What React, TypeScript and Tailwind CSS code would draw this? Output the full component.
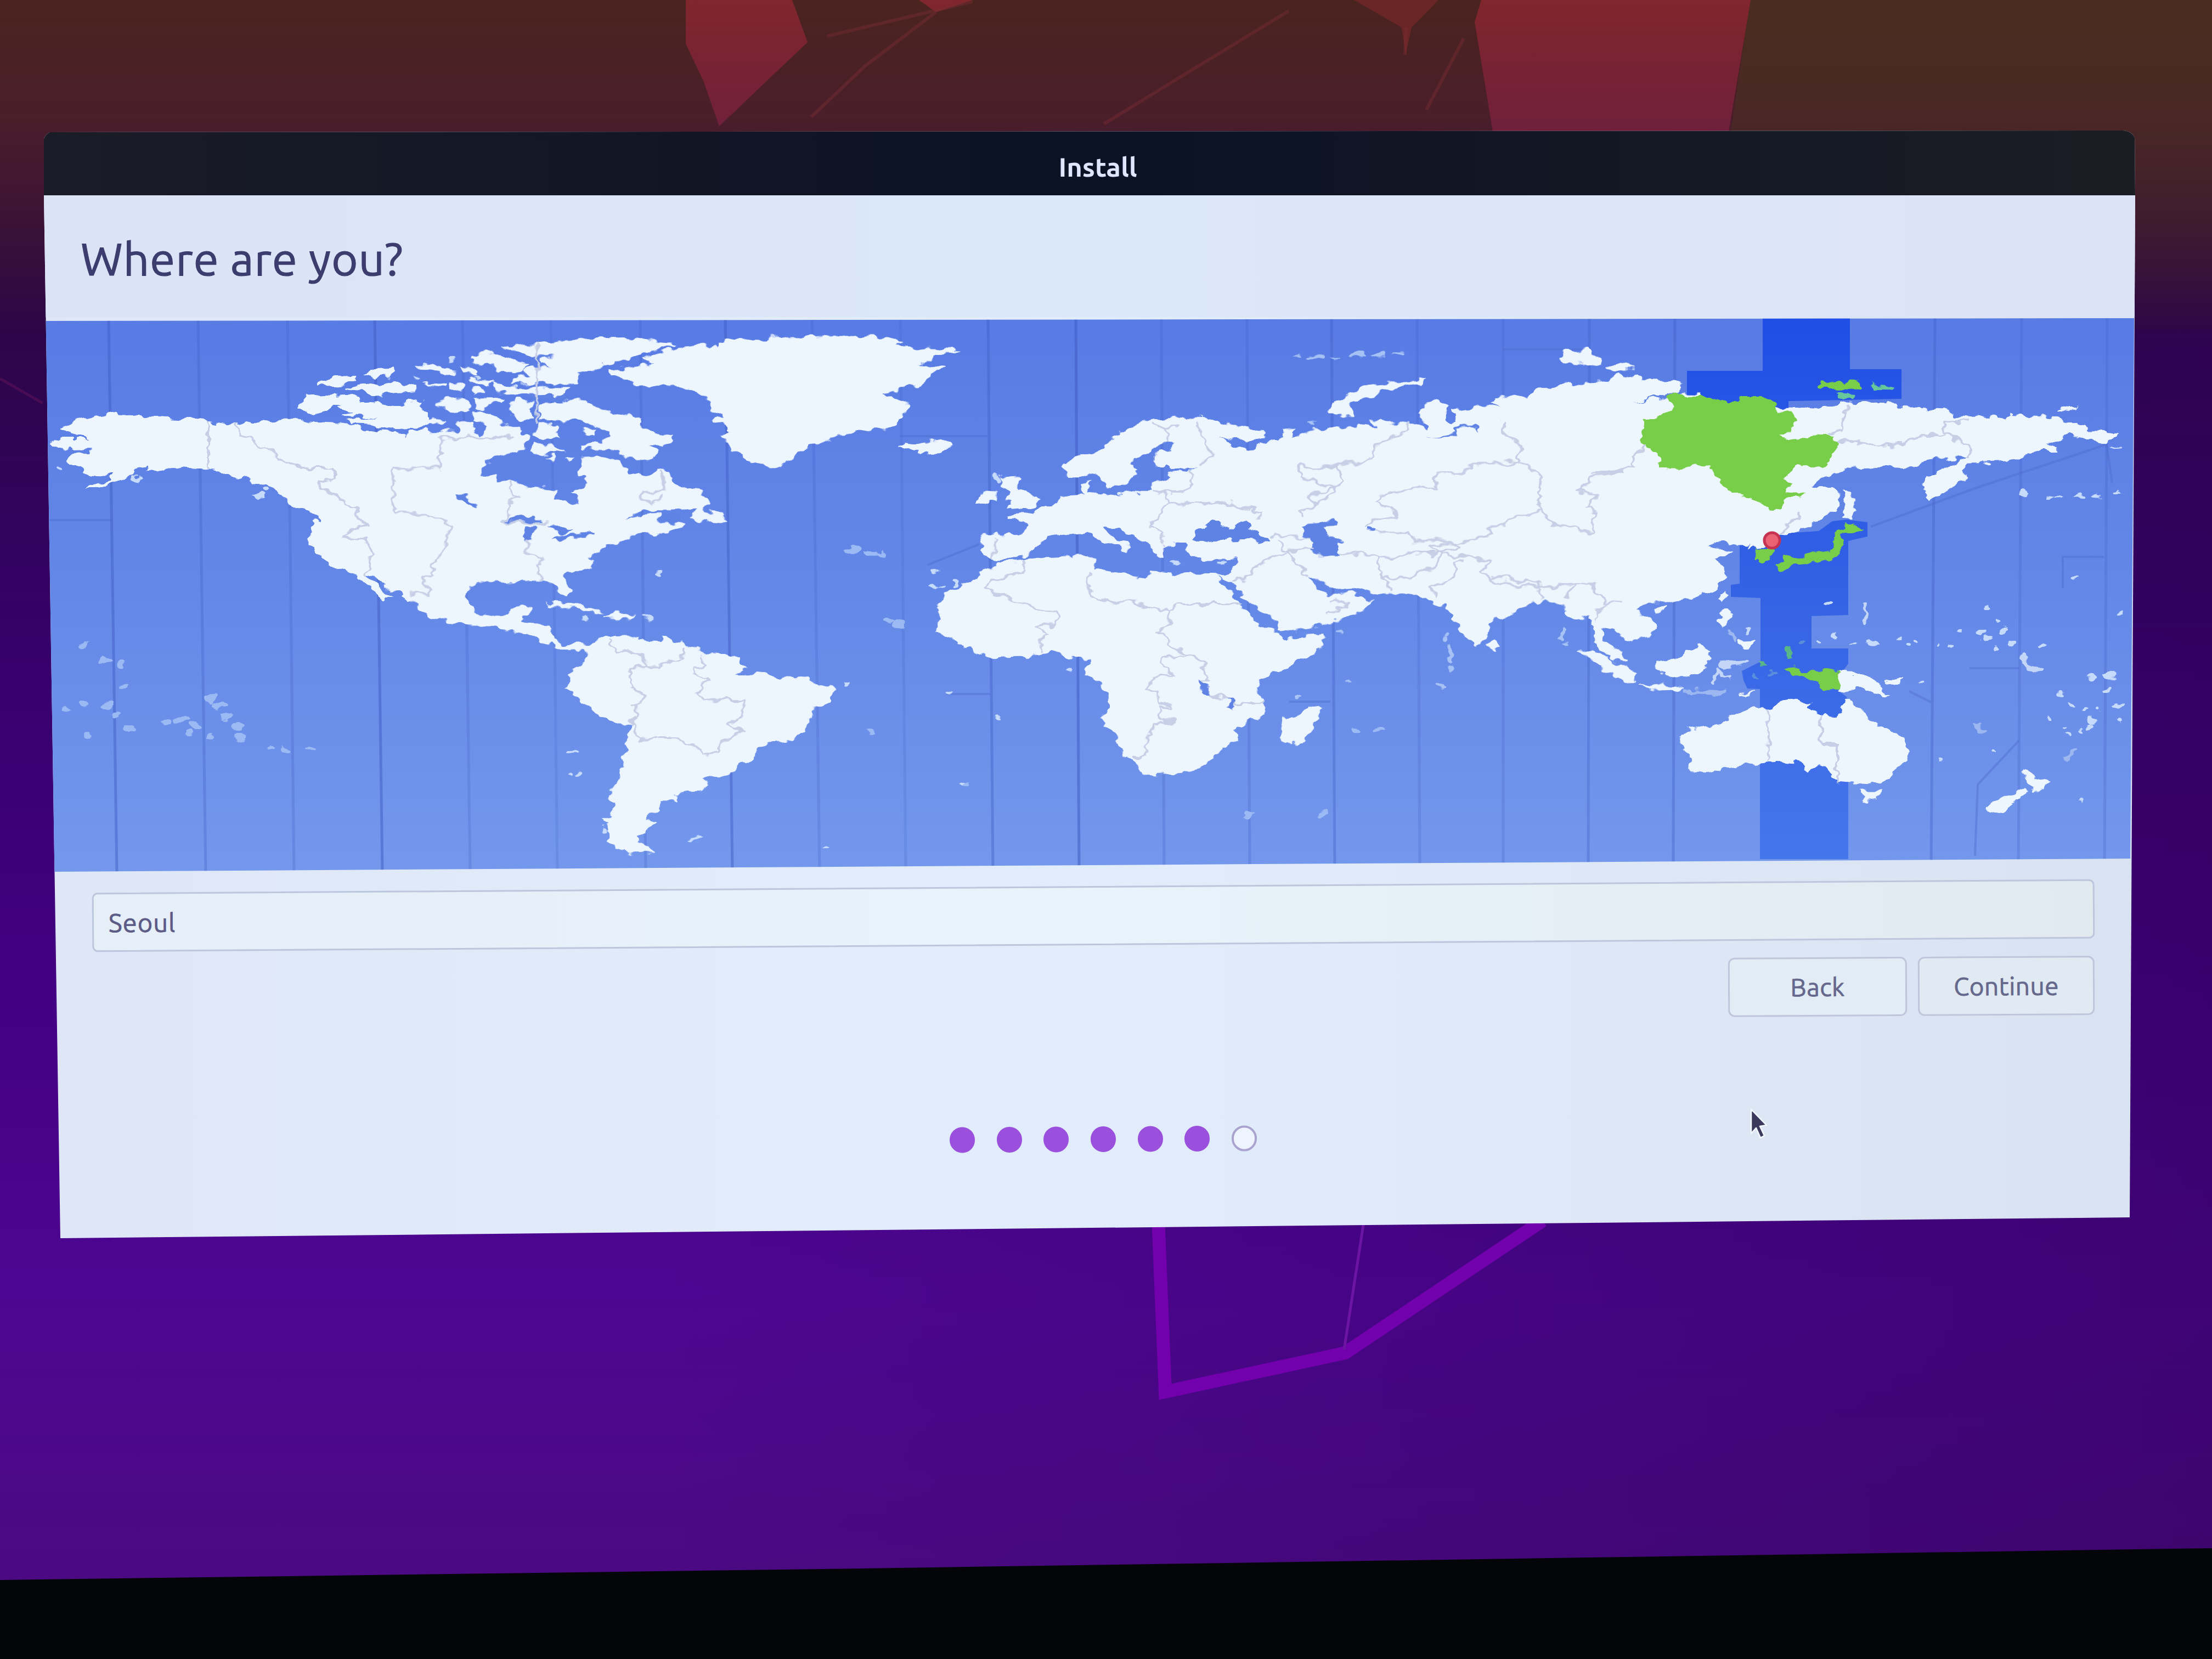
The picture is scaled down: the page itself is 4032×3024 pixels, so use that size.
import React from "react";

type Dot = [number, number, number, number];

const LAND = "fill-[#edf5fd] stroke-[#edf5fd]";
const BORDER = "fill-none stroke-[#c6cfe5]";
const WATER = "fill-[#5f83e4]";
const GREEN = "fill-[#78ce4a]";

const FONT = "font-['Ubuntu','Noto_Sans','Open_Sans',sans-serif]";

/* Hour lines of the map: x at the upper edge, x at the lower edge, line strength. */
const meridians: [number, number, number][] = [
  [198, 213, 0.45], [361, 375, 0.3], [524, 536, 0.25], [683, 697, 0.5], [843, 857, 0.22],
  [1004, 1016, 0.18], [1167, 1177, 0.25], [1322, 1335, 0.45], [1480, 1494, 0.22], [1641, 1651, 0.18],
  [1801, 1810, 0.4], [1961, 1967, 0.55], [2117, 2122, 0.25], [2273, 2278, 0.25], [2427, 2433, 0.35],
  [2583, 2588, 0.22], [2740, 2740, 0.22], [2897, 2895, 0.32], [3053, 3050, 0.35], [3527, 3520, 0.35],
  [3685, 3679, 0.25], [3841, 3836, 0.25],
];

function Region({ x, y, sx, sy, children }: { x: number; y: number; sx: number; sy: number; children: React.ReactNode }) {
  return <g transform={`translate(${x} ${y}) scale(${1 / sx} ${1 / sy})`}>{children}</g>;
}

function Shape({ d, className = LAND, width = 2 }: { d: string; className?: string; width?: number }) {
  return <path d={d} className={className} strokeWidth={width} strokeLinejoin="round" strokeLinecap="round" vectorEffect="non-scaling-stroke" />;
}

function Islands({ dots, className = "fill-[#c6dafa]" }: { dots: Dot[]; className?: string }) {
  return (
    <g className={className}>
      {dots.map(([x, y, rx, ry], i) => (
        <ellipse key={i} cx={x} cy={y} rx={rx} ry={ry} />
      ))}
    </g>
  );
}

function Alaska() {
  return (
    <Region x={80} y={570} sx={2.24} sy={3}>
      <Shape d="M290 548L320 565 400 570 520 580 620 588 680 598 760 612 800 618 830 600 850 612 880 600 930 585 960 590 1000 580 1040 600 1080 595 1150 600 1220 605 1280 620 1310 650 1380 655 1440 650 1480 680 1500 645 1568 640V1560H1480L1440 1520 1400 1490 1350 1440 1310 1435 1340 1480 1390 1520 1415 1560H1385L1320 1500 1290 1450 1260 1420 1220 1395 1170 1380 1130 1330 1085 1280V1200L1100 1140 1130 1135 1120 1100 1070 1070 1000 1040 970 1000 940 960 900 930 860 925 820 895 760 890 720 860 640 850 580 845 520 830 500 850 470 865 420 870 425 830 370 850 350 900 300 915 230 950 160 970 220 935 270 910 285 885 170 880 160 850 100 830 80 800 110 775 190 770 200 735 60 740 35 710 70 690 205 690 160 670 120 655 62 630 100 615 150 585Z" />
      <Shape d="M1070 455L1150 450 1180 462 1250 458 1285 485 1200 505 1160 535 1105 552 1045 520 1060 490Z" />
      <Shape d="M1205 520L1230 500 1280 490 1340 495 1400 505 1460 515 1475 485 1545 475V530L1568 560V615L1480 622 1380 628 1330 605 1250 600 1240 585 1380 578 1300 565 1220 560 1260 545Z" />
      <Shape d="M1112 395L1150 375 1200 350 1275 348 1270 370 1210 400 1130 400ZM1240 410L1300 388 1380 405 1430 372 1460 400 1520 400 1515 430 1440 435 1350 450 1320 430ZM1310 335L1350 310 1430 305V325L1400 350H1350Z" />
      <Islands dots={[[885, 1000, 20, 14], [375, 912, 28, 12], [64, 852, 12, 8], [900, 965, 16, 14], [1545, 290, 24, 14]]} />
      <Shape className={BORDER} width={4} d="M672 600V850M782 620L795 665 845 680 880 735 940 770 960 800 1020 835 1080 852H1185V910L1120 925 1130 960 1210 1020 1270 1060 1280 1120 1325 1160 1265 1170 1230 1230 1335 1245 1330 1380 1315 1435M1568 852H1422L1428 1100H1568" />
    </Region>
  );
}

function NorthAmerica() {
  return (
    <Region x={700} y={570} sx={2.24} sy={2.529}>
      <Shape d="M0 545L60 555 90 578 100 545 160 540 200 550 300 548 310 505 360 505 365 545 385 570 425 530 400 505 360 490 365 455 430 460 465 500 520 525 550 520 560 560 600 565 590 590 560 630 500 645 450 665 410 690 395 720 405 745 440 750 460 778 520 780 560 795 620 808 695 815 700 855 740 865 765 888 785 885 790 850 770 825 820 805 835 785 815 750 800 740 810 710 800 675 900 670 950 685 990 715 1000 735 1050 755 1090 740 1120 720 1160 745 1190 785 1230 820 1290 825 1325 850V880L1300 905 1330 925 1380 930 1400 965 1300 955 1252 950 1290 890 1250 903 1160 908 1060 908 1000 945 980 965 1060 930 1120 925V960L1160 980 1230 970 1220 990 1100 1020 1080 1005 1020 1020 980 1050 910 1070 870 1110 835 1120 855 1135 840 1165 780 1190 730 1215 740 1250 760 1285 750 1300 720 1290 690 1250 640 1235 560 1230 510 1243 410 1235 350 1260 335 1300 345 1350 380 1390 440 1398 500 1390 510 1370 560 1360 600 1362 570 1400 560 1435 680 1440 685 1480 690 1510 730 1535 790 1530 830 1550 790 1545 750 1550 680 1530 620 1500 590 1480 500 1465 440 1440 340 1440 200 1400 155 1380 140 1340 90 1305 0 1255Z" />
      <Shape d="M490 160L620 145 700 135 830 120H1000L1195 145 1150 165 1060 185 960 220 900 235 860 265 800 285 790 325H520L530 300 590 290 570 262 700 250 640 235V215L720 205 560 190ZM350 215L400 180 440 178 500 205 590 240 550 270 470 272 440 245Z" />
      <Shape d="M440 325L500 335 560 345 750 348 740 378 500 375 460 355ZM350 318L360 308 440 315 430 328ZM360 350H410L420 370 370 375ZM370 395H490L480 415 420 425 400 445 375 430ZM205 425L250 400 330 395 350 440 300 460ZM140 240H200L280 265V285L170 265ZM310 255L380 270 385 285 330 275ZM160 325L250 332 240 348ZM265 325H325L320 360 270 350ZM0 345L50 318 60 335 130 340V358L0 372ZM0 260H40L20 295 0 290ZM0 430L75 440 80 410 155 400 150 440 180 485 245 495 200 520 60 515 0 525Z" />
      <Shape d="M515 430L540 402 610 405 600 440 610 485 550 490 520 465ZM635 425L700 402 730 420 740 402H810L860 435 920 460 1050 490 1055 520 1110 555 1180 575 1140 610 1080 595 1110 640V660L1070 680 980 660 920 625 800 625V610L890 605 925 560 920 545 860 520 790 490 700 498 640 490ZM635 510L710 515 700 545 715 575 640 580 620 560ZM820 540H862V560H820ZM595 640L605 600 680 615 735 640 620 650ZM665 668L700 658 690 675ZM740 668H768L758 688Z" />
      <Shape d="M920 270L1050 250 1110 235 1060 210 1110 195 1195 165 1260 155 1340 150 1370 170 1400 155 1440 160 1450 145 1568 155V702L1500 690 1460 650 1420 630 1380 565 1420 540 1460 510 1400 515 1350 490 1440 480 1380 455 1340 460 1345 430 1310 385 1250 345 1150 332 1050 338 1000 320 930 290Z" />
      <Shape d="M660 1350L700 1335 800 1345 890 1380 820 1372 760 1352ZM895 1403L935 1385 1000 1385 1030 1400 960 1408Z" />
      <Islands dots={[[1083, 1405, 18, 8], [825, 1408, 20, 7], [1125, 1200, 12, 8], [280, 218, 14, 8], [135, 295, 12, 7], [380, 298, 14, 6]]} />
      <Shape className={WATER} width={0} d="M480 968L540 933 600 933 650 965 560 962ZM572 1050L578 992 622 984 605 1045ZM670 985L765 992 725 1028 695 1015ZM680 1050L760 1015 855 1010 850 1025 770 1035 720 1058ZM300 838L330 836 372 895 350 897ZM1120 940L1200 930 1205 965 1160 972Z" />
      <Shape className={WATER} width={0} d="M540 382L740 385 735 398 620 398ZM620 200L700 200 610 215Z" />
      <Shape className={BORDER} width={4} d="M530 575H230V715H35L38 925H170L190 945 260 960 270 1000 240 1120 205 1130V1205L160 1215 185 1300 110 1300M515 785L520 830 548 850 500 880 515 920 490 965 660 972M580 1050L580 1100 650 1130 625 1165 640 1235M1130 735L1150 820 1060 825 1050 850 1090 880 1140 850M625 150V510" />
    </Region>
  );
}

function SouthAmerica() {
  return (
    <Region x={950} y={1020} sx={2.529} sy={2.8}>
      <Shape d="M140 425L180 438 260 432 300 438 355 412 380 405 430 395 540 392 545 408 640 415 660 405 740 420 760 440 800 455 840 485 960 488 1000 510 1035 550 985 590 1040 592 1075 578 1170 590 1185 608 1310 612 1350 630 1370 642 1420 648 1440 680 1420 715 1370 745 1335 770 1330 820 1300 880 1250 915 1160 930 1090 955 1070 1010 1000 1050 970 1090 910 1112 830 1108 860 1150 830 1180 715 1185V1222H645L640 1280 580 1305 575 1330 620 1340 600 1362 560 1390 535 1410 540 1440 620 1488 540 1500 470 1480 430 1470 410 1430 400 1390 405 1340 370 1325 425 1300 430 1240 405 1230 415 1170 460 1100 470 1020 495 930 505 850 440 825 360 800 310 750 270 700 205 655 225 620 210 590 270 550 300 520V480L290 450 200 458 140 440Z" />
      <Islands dots={[[635, 68, 14, 9], [240, 978, 24, 10], [220, 1100, 16, 9], [268, 1098, 14, 9], [798, 1424, 36, 9], [1500, 632, 14, 8], [1400, 1472, 20, 7], [380, 1385, 14, 22]]} />
      <Shape className={BORDER} width={4} d="M410 420L435 465 500 480 560 485 575 530 580 550H505L500 640 570 700 560 730 520 740 535 790 515 820 550 920 600 910 700 910 830 960V985L870 1000 910 985 920 940 980 905 1020 870 955 840 1020 780 1030 718 850 715 810 680 860 605 795 580 800 550 850 540 830 490M580 550H640L690 515H740L750 450M505 850L520 800" />
    </Region>
  );
}

function Greenland() {
  return (
    <Region x={0} y={0} sx={0.3889} sy={0.3889}>
      <Shape d="M510 243L545 240 600 238 640 241 636 246 679 248 650 258 668 260 652 272 625 279 645 288 632 302 600 307 575 315 556 328 545 331 530 326 522 315 515 300 505 270Z" />
    </Region>
  );
}

function EuropeAfrica() {
  return (
    <Region x={1650} y={720} sx={1.96} sy={2.178}>
      <Shape d="M330 660L345 665 430 655 500 648 600 642 660 640 680 655 670 685 740 705 830 725 860 728 880 700 1000 712 1110 715 1150 760 1200 840 1250 905 1320 940 1350 965 1495 952 1480 1000 1420 1050 1330 1090 1265 1135 1250 1160 1275 1215 1280 1275 1215 1295 1170 1330 1180 1375 1130 1390 1115 1430 1050 1480 990 1498 870 1508 835 1490 825 1460 770 1410 750 1350 700 1280 735 1240 725 1180 690 1135 645 1110 660 1050 580 1040 555 1018 480 1025 430 1035 300 1040 250 1020 190 990 110 930 130 890 115 835 150 795 190 765 250 735 270 700 320 680Z" />
      <Shape d="M1355 1285L1400 1270 1450 1230 1480 1250 1465 1300 1420 1380 1360 1385 1340 1350Z" />
      <Shape d="M565 265L620 245 690 220 740 170 810 125 870 105 930 95 1000 88 1070 92 1110 105 1220 130 1290 155 1270 175 1200 178 1110 160 1155 185 1160 205 1210 215 1280 205 1310 180 1360 180 1400 168V928L1350 935 1335 930 1320 890 1240 830 1180 760 1160 745 1115 715 1140 715 1165 705 1185 665 1190 645 1140 650 1070 650 1010 630 1000 590 930 590 920 600 925 640 900 640 870 605 860 580 820 560 780 540 740 520 705 525 710 545 760 575 800 600 790 625 770 600 700 575 660 545 600 550 560 555 510 565 460 605 430 640 400 645 320 648 275 635 270 580 280 555 420 552 435 520 420 500 370 490V478L430 475 500 450 540 430 555 410 640 400 625 360 660 335 665 350 655 385 720 400 760 395 820 385 880 385 885 350 950 330 940 310 1035 295 1065 288 920 290 895 280V240L970 200 960 190 910 190 880 225 820 245 805 275 830 300 790 345 740 370 720 365 690 310 665 305 620 325 580 325Z" />
      <Shape d="M340 330L385 320 410 345 400 370 430 385 450 405 485 415 460 440 360 450 385 425 365 410 375 385 345 360ZM255 400L295 378 330 380 325 420 260 435ZM-24 200L0 185 40 190 130 178 165 200 130 225 50 232 0 215Z" />
      <Islands dots={[[108, 700, 10, 9], [100, 760, 18, 10], [175, 750, 9, 9], [130, 765, 12, 5], [160, 1188, 12, 7], [335, 1282, 12, 7], [208, 1545, 11, 7], [592, 1090, 11, 9], [1403, 1196, 12, 8], [960, 662, 22, 5], [1130, 665, 18, 6], [325, 335, 10, 14]]} />
      <Shape className={BORDER} width={4} d="M420 660L430 700 390 710 280 760 310 785 460 840 540 870 545 905 465 920 510 950 480 970 490 1015M660 700L650 760 670 805 740 820 800 820 940 860 965 830H1200M945 865L940 910 905 940 940 985 1010 1030 920 1040 925 1090 955 1110 890 1120 860 1170 900 1180 910 1225H945V1240H910L915 1290 965 1298 895 1305 865 1350 860 1430 820 1435M1010 1030L1085 1055 1060 1090 1080 1130 1055 1145 1095 1190 1160 1205M1165 1222H1275M325 570L315 645M930 135L940 190M1045 110L1060 170 1095 240 1050 280M1020 300L1025 355 990 385 890 385M935 390L940 430 1080 432 1150 420 1200 450 1270 460 1260 500M940 430L900 500 875 520 915 540 920 590M1170 745L1210 730 1250 690 1300 650 1350 630 1345 600M880 115L930 135 970 125" />
      <Shape className={WATER} width={0} d="M1050 1135L1062 1138 1095 1185 1085 1190 1055 1160ZM1155 1205L1165 1205 1175 1250 1160 1245Z" />
    </Region>
  );
}

function Asia() {
  return (
    <Region x={2300} y={620} sx={1.96} sy={2.24}>
      <Shape d="M0 430L60 405 85 405 80 365 115 365 100 395 200 365 300 355 410 350 380 320 440 335 500 335 550 348 590 370V345L550 305 600 258 630 245 660 265V320L672 355 690 335 685 290 715 285 760 270 830 270 860 275 830 255 840 240 950 232 970 205 1060 185 1150 180 1240 165 1270 140 1330 150 1370 165 1440 160 1500 180 1480 205 1440 220 1568 225V1045L1500 1055 1440 1070 1380 1070 1340 1100 1400 1145 1410 1180 1380 1205 1320 1225 1250 1180 1210 1180 1215 1220 1250 1255 1290 1275 1300 1310 1250 1300 1190 1235V1180L1165 1135H1110L1095 1100 1045 1060 1000 1065 940 1085 880 1120 815 1150 805 1200 770 1240 740 1225 680 1140 660 1075 610 1080 575 1050 530 1030H400L330 1010 290 1015 240 1005 210 975 160 972 200 1020 240 1050 320 1030 340 1050 395 1070 370 1100 240 1155 140 1180 75 1190 50 1130 0 1095Z" />
      <Shape d="M235 290L300 235 360 195 480 172 580 162 570 178 430 205 340 245 310 275 330 310 270 300ZM1060 78L1090 45 1160 42 1180 70 1220 85 1200 105 1120 90ZM1225 120L1265 92 1330 110 1300 120ZM1130 1270L1180 1275 1290 1330 1340 1370 1325 1400 1260 1375 1200 1310ZM1340 1410L1430 1408 1510 1420 1440 1432ZM812 1235L830 1230 848 1250 830 1268 812 1258ZM1398 1100L1440 1088 1430 1108 1405 1112Z" />
      <Islands className="fill-[#a6c2f4]" dots={[[125, 66, 14, 4], [190, 66, 34, 7], [270, 70, 20, 4], [345, 62, 30, 12], [418, 62, 26, 8], [490, 54, 24, 6], [180, 345, 14, 6], [655, 1210, 12, 18], [672, 1280, 11, 34], [672, 1340, 9, 12], [645, 1410, 18, 10], [1075, 1200, 8, 24], [1085, 1245, 12, 8], [310, 1396, 12, 6], [130, 1456, 12, 7], [278, 1192, 12, 6]]} />
      <Shape className={WATER} width={0} d="M0 790L30 800 25 822 0 825ZM135 770L180 745 260 736 270 758 220 765 235 792 265 810 295 822 265 826 278 880 200 880 170 855 185 825 160 800ZM1300 655L1360 635 1410 588 1424 590 1415 615 1350 650 1320 660ZM585 388L630 395 690 375 700 345 760 345 775 368 740 352 710 355 690 385 640 402ZM1335 252L1430 225 1450 215 1445 228 1380 250ZM382 765H410V778H382Z" />
      <Shape className={BORDER} width={4} d="M520 335V370L470 395 400 435 390 490 240 510 180 525 140 505 130 560 190 575 270 600 200 625 160 640 200 670 135 700 145 720M270 510L285 570 265 620 180 680M180 525L235 520 275 510M860 330L865 375 930 430 915 500 750 505 740 530 690 548 620 548 625 600 540 610 425 630 410 660 460 680 485 720 400 740 370 765M410 775L520 790 550 820 630 815 700 830 820 795 815 765 870 745 930 710 1000 700 985 650 1000 600 990 550 960 515 915 500M1000 700L1040 755 1120 765 1180 790 1195 700 1160 685 1200 635 1130 612 1190 555 1270 540 1330 520 1320 490 1360 440M280 870L420 880 470 895 520 870 640 870 700 850 680 830 600 840 640 880 620 920 530 965 430 975 415 910 420 880M430 975L465 1020M640 880L710 880 820 900 785 945 830 985 980 1010 1080 1000 1180 990 1195 1030M710 900L690 905 700 945 660 990 600 1000 625 1050M820 965L860 970 1000 995M1080 1050L1120 1000M1195 1030L1230 1075 1330 1055M1190 1140L1195 1110 1240 1075M990 1000L1000 1055M40 800L170 805M60 820L85 860 120 900 160 970M85 860L180 845M240 1110L300 1095 310 1065 250 1070M0 920L40 880 80 870" />
    </Region>
  );
}

function FarEast() {
  return (
    <Region x={2900} y={570} sx={1.568} sy={2.45}>
      <Shape d="M90 280L150 295 235 300 262 325 200 370 215 375 230 440 560 430 565 425 640 430 720 400 850 405 870 425 1010 432 1040 465 1150 465 1190 485 1200 458 1310 465 1390 500 1440 530 1505 535 1500 555 1460 578 1400 555 1360 545 1340 570 1290 580 1330 600V620L1270 620 1190 660 1080 668 1060 700 1070 740 1000 810 975 835 950 790 955 740 1000 705 1060 665 1085 635 1030 660 1010 640 960 650 920 690 840 685 740 690 690 720 625 770 640 790 700 788 712 800 700 870 640 930 590 980 540 985 500 1000 520 1040 450 1050 460 1035 395 1035 380 1010 325 1045 400 1065 355 1100 380 1140 385 1190 350 1240 280 1275 200 1290H90Z" />
      <Shape className={WATER} width={0} d="M125 400L200 370 240 352 255 352 200 382Z" />
      <Shape className={GREEN} width={0} d="M215 370L240 350 262 375 340 375 350 388 415 390 430 375H500L520 405 530 440H575L585 480 570 530 540 545 570 570 640 545 695 548 705 610 670 685 580 695 555 745 575 765 555 800 610 800 608 812 560 835 550 880 490 870 460 820 400 800 365 740 345 690 300 680 260 698 195 695 190 625 140 580 150 480 210 455 235 430Z" />
      <Shape d="M725 795L740 800 755 865 742 920 722 915 730 860Z" />
      <Shape className="fill-none stroke-[#78ce4a]" width={14} d="M740 955L745 970M705 990L712 1030 690 1080 620 1105 560 1110 540 1140M660 325H765" />
      <Shape className={GREEN} width={0} d="M730 938L745 950 780 962 745 990 720 980 705 1000 695 985 718 960ZM470 1105L472 1050 515 1055 518 1085 505 1105Z" />
      <Shape className="fill-[#68c79a]" width={0} d="M805 320L868 325 865 342 810 340ZM700 358L750 362V385L705 380Z" />
      <Shape d="M1335 430L1360 418 1388 422 1370 436ZM368 1270L385 1245 388 1262 375 1282ZM185 1320L215 1310 195 1338Z" />
      <Islands dots={[[1238, 806, 12, 14], [1310, 824, 12, 7], [1330, 828, 8, 6], [1393, 822, 14, 8], [1446, 815, 14, 7], [1503, 804, 12, 8], [1502, 602, 16, 6], [1383, 1185, 15, 7], [680, 1295, 7, 9], [1130, 1315, 8, 7], [1513, 1340, 9, 9], [1165, 1378, 8, 7]]} />
      <Shape className={BORDER} width={4} d="M740 415L720 470 720 520 680 540M1080 480L1010 485 1005 530 1080 590 1080 640M1010 545L940 550 890 590 830 595 760 575 700 570M590 890L600 920 560 940 545 980M0 722L80 705 120 680 115 650 150 610 150 590" />
    </Region>
  );
}

function Oceania() {
  return (
    <Region x={2850} y={1100} sx={1.493} sy={3}>
      <Shape d="M320 720L340 690 430 665 470 610 520 565 540 570 555 590 575 580 585 540 620 530 670 540 665 580 700 610 740 622 757 600 762 520 775 515 790 560 820 600 835 650 880 690 930 745 940 800 930 860 900 900 885 965 830 985 750 975 730 930 705 880 690 885 668 908 640 870 580 860 530 870 470 890 400 915 380 925 345 915 350 850 325 790Z" />
      <Shape d="M805 1025H860L850 1070 820 1078ZM1250 910L1275 945 1325 965 1300 1010 1280 1028 1265 990ZM1235 1020L1262 1025 1240 1065 1190 1135 1150 1120 1170 1090Z" />
      <Shape d="M750 380L800 385 850 430 885 500 850 490 810 460 750 485ZM250 325L300 310 370 235 398 260 385 340 345 402 280 390 255 360ZM430 50L455 45V70L440 140 422 95ZM480 210L518 205 508 245 485 240ZM475 505L520 480 500 500ZM870 432L930 405 915 425Z" />
      <Shape className={GREEN} width={0} d="M605 345L640 348 645 380 700 358 750 378V478L705 472 700 430 640 405 620 395Z" />
      <Shape className="fill-[#58b687]" width={0} d="M600 245L618 235 622 300 608 305ZM538 310L555 305V335L540 340Z" />
      <Shape className="fill-none stroke-[#c3d6f8]" width={7} d="M425 335L495 325M412 425L420 360 435 390 450 410M1248 285L1260 330 1300 375M820 0L825 60 818 110" />
      <Shape className="fill-none stroke-[#9db8f0]" width={7} d="M330 480L440 490M1120 668L1145 698M1385 805L1370 855M455 160L470 200" />
      <Islands dots={[[498, 150, 8, 12], [695, 205, 7, 8], [735, 192, 10, 14], [840, 212, 18, 9], [788, 225, 10, 7], [915, 195, 7, 10], [932, 228, 9, 12], [960, 205, 6, 9], [1058, 234, 7, 8], [1077, 152, 8, 9], [1015, 225, 5, 8], [1135, 160, 10, 26], [1158, 185, 8, 14], [1195, 155, 10, 18], [1185, 98, 7, 9], [1175, 248, 10, 16], [1222, 215, 10, 9], [1303, 234, 12, 12], [1150, 22, 7, 9], [970, 435, 10, 8], [1435, 400, 11, 14], [1484, 388, 20, 22], [1355, 492, 10, 18], [1480, 475, 12, 14], [1383, 560, 8, 12], [1420, 575, 7, 9], [1452, 582, 7, 9], [1510, 560, 16, 9], [1325, 628, 6, 18], [1440, 640, 12, 26], [1430, 675, 10, 12], [1370, 668, 7, 9], [1410, 695, 6, 8], [1373, 716, 7, 9], [1512, 636, 9, 9], [1168, 808, 6, 14], [1030, 858, 8, 8], [1410, 1080, 7, 9], [1516, 52, 7, 10]]} />
      <Islands className="fill-[#5a8fdc]" dots={[[648, 215, 8, 10], [568, 390, 12, 10], [525, 395, 8, 9]]} />
      <Shape className={BORDER} width={4} d="M558 590V858M700 615V765H745V970" />
    </Region>
  );
}

/* Small archipelagos of the Pacific and the Atlantic, in map coordinates. */
const atolls: Dot[] = [
  [154, 1175, 7, 5], [190, 1204, 9, 7], [218, 1212, 7, 6], [226, 1250, 8, 6], [152, 1283, 7, 5], [196, 1285, 9, 6],
  [213, 1303, 8, 6], [236, 1328, 9, 6], [160, 1340, 8, 6], [122, 1292, 6, 5], [305, 1316, 9, 6], [330, 1310, 12, 7],
  [355, 1322, 12, 7], [382, 1272, 12, 8], [400, 1284, 13, 7], [412, 1305, 12, 7], [433, 1322, 12, 8], [438, 1344, 12, 6],
  [385, 1340, 9, 5], [345, 1338, 8, 5], [494, 1362, 7, 5], [520, 1366, 7, 5], [565, 1366, 7, 5], [1556, 1003, 16, 6],
  [1590, 1008, 14, 5], [1608, 1012, 8, 5], [1620, 1134, 9, 6], [1640, 1138, 12, 8], [1586, 1332, 7, 5], [1765, 1430, 8, 5],
  [2275, 1486, 8, 5], [2412, 1481, 9, 5], [2515, 1330, 9, 5], [2470, 1332, 9, 5],
];

function WorldMap() {
  return (
    <svg viewBox="78 578 3816 1014" className="block h-[1014px] w-[3816px]" role="img" aria-label="World time zone map">
      <defs>
        <linearGradient id="ocean" x1="0" y1="0" x2="0" y2="1">
          <stop offset="0" stopColor="#587be4" />
          <stop offset="0.5" stopColor="#6488e7" />
          <stop offset="1" stopColor="#7398ec" />
        </linearGradient>
        <linearGradient id="zone" gradientUnits="userSpaceOnUse" x1="0" y1="580" x2="0" y2="1570">
          <stop offset="0" stopColor="#204ee6" />
          <stop offset="0.5" stopColor="#3462e4" />
          <stop offset="1" stopColor="#4676ec" />
        </linearGradient>
        <clipPath id="frame">
          <path d="M82 585L3890 580 3883 1565 96 1589Z" />
        </clipPath>
        <filter id="coast" filterUnits="userSpaceOnUse" x="78" y="578" width="3816" height="1014">
          <feTurbulence type="fractalNoise" baseFrequency="0.045 0.07" numOctaves="2" seed="7" result="noise" />
          <feDisplacementMap in="SourceGraphic" in2="noise" scale="20" xChannelSelector="R" yChannelSelector="G" />
        </filter>
      </defs>
      <g clipPath="url(#frame)">
        <rect x="78" y="578" width="3816" height="1014" fill="url(#ocean)" />
        <g className="stroke-[#3f5cc4]" strokeWidth="5">
          {meridians.map(([a, b, strength]) => (
            <line key={a} x1={a} y1="580" x2={b} y2="1592" strokeOpacity={strength} />
          ))}
        </g>
        <path
          className="fill-none stroke-[#4a68cc]/40"
          strokeWidth="4"
          d="M90 948H204M1640 795H1800M1690 1030L1785 992M2740 637H2900M2425 1279H2350M1725 1265H1805M3410 960L3600 890 3840 810 3850 880M3760 1072V1015H3835M3590 1218H3680M3680 1350L3605 1430 3600 1560M3480 1260L3520 1280"
        />
        <path
          fill="url(#zone)"
          d="M3213 580H3372V673H3466V727L3260 731V750H3075V676H3213ZM3220 974L3315 968 3340 950 3366 947 3404 952V978L3369 986V1121L3302 1123V1182H3369V1210L3359 1223 3352 1260 3366 1270 3369 1400V1566H3208V1256L3185 1255 3178 1240 3175 1223 3209 1206V1090L3155 1088V1066L3171 1064V992L3232 978Z"
        />
        <g filter="url(#coast)">
          <Alaska />
          <NorthAmerica />
          <SouthAmerica />
          <Greenland />
          <EuropeAfrica />
          <Asia />
          <FarEast />
          <Oceania />
          <Islands className="fill-[#9bb9f2]" dots={atolls} />
          <path className="fill-[#5f83e4]" d="M2170 984L2181 966 2206 952 2234 956 2237 963 2257 956 2278 952 2275 963 2312 977 2314 985 2262 984 2226 985 2191 989Z" />
        </g>
        <circle cx="3230" cy="985" r="14" strokeWidth="5" className="fill-[#ea6374] stroke-[#c53350]" />
      </g>
    </svg>
  );
}

function Backdrop() {
  return (
    <svg viewBox="0 0 4032 3024" className="absolute inset-0 h-full w-full" aria-hidden="true">
      <defs>
        <linearGradient id="sky" x1="0" y1="0" x2="0" y2="1">
          <stop offset="0" stopColor="#4a241f" />
          <stop offset="0.07" stopColor="#4a1e2a" />
          <stop offset="0.13" stopColor="#3c1335" />
          <stop offset="0.2" stopColor="#2c0648" />
          <stop offset="0.4" stopColor="#37006c" />
          <stop offset="0.6" stopColor="#430083" />
          <stop offset="0.78" stopColor="#4e0692" />
          <stop offset="1" stopColor="#4a0b7e" />
        </linearGradient>
        <linearGradient id="dusk" x1="0" y1="0" x2="1" y2="0">
          <stop offset="0.3" stopColor="#2a0060" stopOpacity="0" />
          <stop offset="1" stopColor="#300058" stopOpacity="0.5" />
        </linearGradient>
        <linearGradient id="ember" x1="0" y1="0" x2="0" y2="1">
          <stop offset="0" stopColor="#80262c" />
          <stop offset="1" stopColor="#70203c" />
        </linearGradient>
        <linearGradient id="amber" x1="0" y1="0" x2="0" y2="1">
          <stop offset="0" stopColor="#4a3020" stopOpacity="0.7" />
          <stop offset="0.4" stopColor="#4a3020" stopOpacity="0.5" />
          <stop offset="1" stopColor="#4a3020" stopOpacity="0" />
        </linearGradient>
      </defs>
      <rect width="4032" height="3024" fill="url(#sky)" />
      <rect y="600" width="4032" height="2424" fill="url(#dusk)" />
      <path fill="url(#amber)" d="M3190 0H4032V620H3100Z" />
      <path fill="url(#ember)" d="M1250 0H1344L1444 0 1472 77 1416 130 1311 230 1282 147 1250 80ZM1675 0H1773L1706 22ZM2700 0H3191L3151 240H2721L2688 40Z" />
      <path className="fill-[#6a2626]" d="M2468 0H2622L2573 50 2562 100 2555 50Z" />
      <path className="fill-none stroke-[#7a2c34]/45" strokeWidth="6" d="M1706 22L1577 120 1479 213M1773 3L1507 66M2349 20L2152 140 2012 226M2563 50L2561 100M2668 70L2600 200" />
      <path className="fill-none stroke-[#7200ac]" strokeLinejoin="miter" strokeWidth="24" d="M2111 2220L2124 2537 2452 2466 2812 2225" />
      <path className="fill-none stroke-[#6c14a4]" strokeWidth="5" d="M2487 2220L2450 2460" />
      <path className="fill-none stroke-[#5c1058]/60" strokeWidth="5" d="M0 690L78 735" />
      <path className="fill-[#040508]" d="M0 2880L1500 2860 4032 2822V3024H0Z" />
    </svg>
  );
}

function StepDots() {
  return (
    <div className="flex rotate-[-0.33deg] items-center justify-center gap-[39.7px]">
      {[0, 1, 2, 3, 4, 5].map((n) => (
        <span key={n} className="h-[47px] w-[46px] rounded-full bg-[#9a4fdd]" />
      ))}
      <span className="h-[47px] w-[46px] rounded-full border-4 border-[#aaa2cf] bg-[#eef4fd]" />
    </div>
  );
}

function Pointer() {
  return (
    <svg viewBox="0 0 32 56" className="absolute top-[2020px] left-[3190px] h-[56px] w-[32px]" aria-hidden="true">
      <path d="M2 2V46L11 36 19 54 26 50 18 33 30 31Z" className="fill-[#3c3a5c] stroke-[#f4f8ff]" strokeWidth="2.5" strokeLinejoin="round" />
    </svg>
  );
}

export default function App() {
  return (
    <div className={`relative h-[3024px] w-[4032px] overflow-hidden bg-[#430083] pt-[238px] pl-[78px] ${FONT}`}>
      <Backdrop />
      <main className="relative flex h-[2019px] w-[3816px] flex-col rounded-t-[24px] bg-linear-to-r from-[#dfe7f6] via-[#e2edfb] to-[#d9e2f0] [clip-path:polygon(2px_3px,3813px_0px,3814px_118px,3804px_1981px,32px_2019px,2px_118px)]">
        <header className="flex h-[118px] shrink-0 items-center justify-center rounded-t-[24px] bg-linear-to-r from-[#1a1c27] via-[#0b1224] to-[#1b1d24] pl-[30px] text-[49px] leading-none font-bold text-[#dfe6ff]">
          <h1 className="translate-y-[6px]">Install</h1>
        </header>
        <section className="flex h-[222px] shrink-0 items-center bg-linear-to-r from-[#dbe4f6] via-[#dbe7fb] to-[#dde3f6] pl-[69px]">
          <h2 className="translate-y-[4px] text-[83px] leading-none tracking-[1.1px] whitespace-nowrap text-[#3d3c6e] [-webkit-text-stroke:1.2px_#3d3c6e]">Where are you?</h2>
        </section>
        <WorldMap />
        <section className="flex flex-col">
          <div className="ml-[90px] mt-[23px] flex h-[108px] w-[3650px] rotate-[-0.39deg] items-center rounded-[10px] border-[3px] border-[#bcc6dd] bg-linear-to-r from-[#e6eef8] via-[#e8f3fb] to-[#e2eaf0] pl-[27px] text-[47px] leading-none tracking-[1px] text-[#5b5b86] [-webkit-text-stroke:0.8px_#5b5b86]">
            <span className="rotate-[0.2deg]">Seoul</span>
          </div>
          <div className="mt-[21px] mr-[76px] flex rotate-[-0.3deg] justify-end gap-[20px] self-end text-[46px] leading-none tracking-[0.4px] text-[#65688c] [-webkit-text-stroke:0.8px_#65688c]">
            <button className="h-[108px] w-[326px] rounded-[12px] border-[3px] border-[#bfc6dc] bg-[#e2ecf5]">Back</button>
            <button className="h-[108px] w-[322px] rounded-[12px] border-[3px] border-[#bfc6dc] bg-[#e1eaf2]">Continue</button>
          </div>
          <div className="mt-[201px] pl-[50px]">
            <StepDots />
          </div>
        </section>
      </main>
      <Pointer />
    </div>
  );
}
